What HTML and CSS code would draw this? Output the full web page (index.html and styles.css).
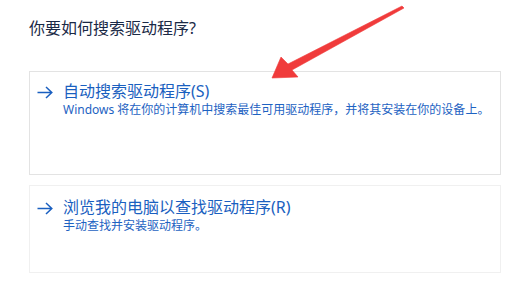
FILE: index.html
```html
<!DOCTYPE html>
<html lang="zh-CN">
<head>
<meta charset="utf-8">
<link rel="stylesheet" href="styles.css">
</head>
<body>
<div class="page">
  <h1 class="question">你要如何搜索驱动程序?</h1>
  <div class="options">
    <div class="option option-auto">
      <svg class="go" viewBox="0 0 16 13" width="16" height="13"><path d="M0.5 6.5H15M9 1L14.8 6.5L9 12" fill="none" stroke="currentColor" stroke-width="1.5"/></svg>
      <div class="texts">
        <div class="opt-title">自动搜索驱动程序(S)</div>
        <div class="opt-desc">Windows 将在你的计算机中搜索最佳可用驱动程序，并将其安装在你的设备上。</div>
      </div>
    </div>
    <div class="option option-manual">
      <svg class="go" viewBox="0 0 16 13" width="16" height="13"><path d="M0.5 6.5H15M9 1L14.8 6.5L9 12" fill="none" stroke="currentColor" stroke-width="1.5"/></svg>
      <div class="texts">
        <div class="opt-title">浏览我的电脑以查找驱动程序(R)</div>
        <div class="opt-desc">手动查找并安装驱动程序。</div>
      </div>
    </div>
  </div>
  <svg class="callout" viewBox="0 0 527 296" width="527" height="296">
    <polygon points="402,6 404,8 292,70 298,77 272,78 281,57 288,64" fill="#f03b3b" stroke="#f03b3b" stroke-width="0.6" stroke-linejoin="round"/>
  </svg>
</div>
</body>
</html>
```
FILE: styles.css
```css
html, body {
  margin: 0;
  padding: 0;
  background: #ffffff;
}
.page {
  position: relative;
  width: 527px;
  height: 296px;
  overflow: hidden;
  padding: 17px 0 0 29px;
  box-sizing: border-box;
  font-family: "Noto Sans", "Noto Sans CJK SC", sans-serif;
}
.question {
  margin: 0;
  font-size: 16px;
  line-height: 22px;
  font-weight: 400;
  color: #1a2946;
}
.options {
  margin-top: 32px;
  display: flex;
  flex-direction: column;
  gap: 10px;
  width: 472px;
}
.option {
  display: flex;
  align-items: flex-start;
  gap: 10px;
  background: #ffffff;
  box-sizing: border-box;
  padding-left: 7px;
  color: #1a5fc0;
}
.option-auto {
  height: 104px;
  border: 1px solid #e3e3e3;
  padding-top: 10px;
}
.option-manual {
  height: 88px;
  border: 1px solid #f0f0f0;
  padding-top: 12px;
}
.go {
  flex: none;
  margin-top: 4px;
  color: #1a5fc0;
}
.texts {
  display: flex;
  flex-direction: column;
  gap: 1px;
}
.opt-title {
  font-size: 16px;
  line-height: 19px;
  white-space: nowrap;
}
.opt-desc {
  font-size: 12px;
  line-height: 16px;
  white-space: nowrap;
  color: #1d62c2;
}
.callout {
  position: absolute;
  left: 0;
  top: 0;
  pointer-events: none;
}
```
